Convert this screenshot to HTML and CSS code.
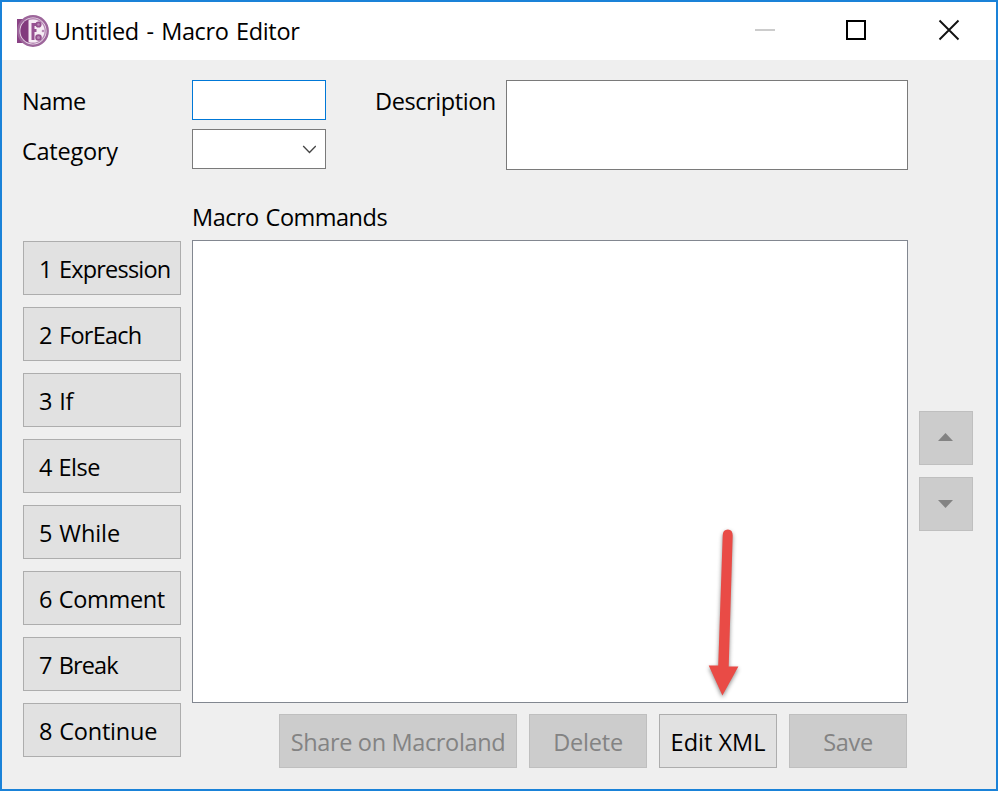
FILE: index.html
```html
<!DOCTYPE html>
<html lang="en">
<head>
<meta charset="utf-8">
<title>Untitled - Macro Editor</title>
<link rel="stylesheet" href="styles.css">
</head>
<body>
<div class="window">
  <header class="titlebar">
    <svg class="logo" width="34" height="34" viewBox="0 0 34 34">
      <rect x="1" y="5" width="8" height="24" fill="#8a4285"/>
      <circle cx="17" cy="17" r="14.700" fill="#f4eaf3" stroke="#9d669b" stroke-width="2.400"/>
      <circle cx="17" cy="17" r="12.200" fill="#f6edf5" stroke="#b88bb6" stroke-width="1.400"/>
      <path d="M12.500 5.500A12.300 12.300 0 0 0 12.500 28.500Z" fill="#823b7d"/>
      <path d="M15.500 9h5.500v3h-2.500v3h2v3h-2v8h-3z" fill="#965192"/>
      <circle cx="22.500" cy="10.500" r="2.200" fill="#b98ab7" stroke="#94518f" stroke-width="1.800"/>
      <circle cx="27" cy="17" r="1.300" fill="#b98ab7"/>
      <circle cx="22.500" cy="23.500" r="2.400" fill="#b98ab7" stroke="#94518f" stroke-width="1.800"/>
    </svg>
    <h1 class="title">Untitled - Macro Editor</h1>
    <svg class="controls" width="206" height="22" viewBox="0 0 206 22" fill="none">
      <path d="M0 11H20" stroke="#ccc" stroke-width="2"/>
      <rect x="92" y="2" width="18" height="18" stroke="#000" stroke-width="2"/>
      <path d="M184.500 1.500L203.500 20.500M203.500 1.500L184.500 20.500" stroke="#111" stroke-width="1.900"/>
    </svg>
  </header>
  <main class="content">
    <section class="fields">
      <div class="names">
        <label class="text name">Name</label><div class="box input"></div>
        <label class="text category">Category</label>
        <div class="box select">
          <svg width="14" height="9" viewBox="0 0 14 9" fill="none"><path d="M1.200 1L7.500 7.500L13.800 1" stroke="#444" stroke-width="1.300"/></svg>
        </div>
      </div>
      <label class="text description">Description</label>
      <div class="box area"></div>
    </section>
    <h2 class="text heading">Macro Commands</h2>
    <section class="workspace">
      <nav class="commands">
        <button class="button expression">1 Expression</button>
        <button class="button foreach">2 ForEach</button>
        <button class="button if">3 If</button>
        <button class="button else">4 Else</button>
        <button class="button while">5 While</button>
        <button class="button comment">6 Comment</button>
        <button class="button break">7 Break</button>
        <button class="button continue">8 Continue</button>
      </nav>
      <div class="editor">
        <div class="list"></div>
        <div class="actions">
          <button class="button share" disabled>Share on Macroland</button>
          <button class="button delete" disabled>Delete</button>
          <button class="button edit">Edit XML</button>
          <button class="button save" disabled>Save</button>
        </div>
        <svg class="arrow" width="50" height="182" viewBox="0 0 50 182">
          <path d="M13 15.500Q13 9.500 18.200 9.500Q23 9.500 23 15.500L19 146.500H28.700L12.700 175.500L-1 145.500H8.500Z" transform="translate(9.700 0)" fill="#e94b46"/>
        </svg>
      </div>
      <div class="order">
        <button class="button" disabled aria-label="Move up"><svg width="16" height="8" viewBox="0 0 16 8"><path d="M0 8L7.500 0L15 8Z" fill="#838383"/></svg></button>
        <button class="button down" disabled aria-label="Move down"><svg width="16" height="8" viewBox="0 0 16 8"><path d="M0 0L7.500 8L15 0Z" fill="#838383"/></svg></button>
      </div>
    </section>
  </main>
</div>
</body>
</html>
```
FILE: styles.css
```css
* { box-sizing: border-box; }
body { margin: 0; }
.window {
  width: 998px; height: 791px;
  border: 2px solid #1a82d8;
  background: #efefef; color: #000;
  font: 23.5px/32px "Open Sans", "Noto Sans", sans-serif;
  overflow: hidden;
}
.titlebar { display: flex; height: 58px; background: #fff; padding: 12px 35px 0 14px; }
.logo { flex: none; }
.title { margin: 1px 0 0 4px; font: inherit; white-space: nowrap; letter-spacing: -.36px; word-spacing: 1.8px; }
.controls { margin: 5px 0 0 auto; }
.content { padding: 20px 23px 0 21px; }
.fields { display: flex; height: 90px; }
.names { display: grid; grid-template: 40px 40px / 169px 134px; row-gap: 9px; width: 303px; }
.text { margin: 0; font: inherit; white-space: nowrap; }
.name { padding-top: 5px; margin-left: -1px; letter-spacing: -.5px; }
.category { padding-top: 6px; margin-left: -1px; letter-spacing: -.25px; }
.description { width: 131px; margin-left: 49px; padding-top: 5px; letter-spacing: -.42px; }
.box { background: #fff; border: 1px solid #7a7a7a; }
.input { border-color: #0078d7; }
.select { display: flex; justify-content: flex-end; align-items: center; padding-right: 9px; }
.area { width: 402px; height: 90px; }
.heading { margin: 31px 0 7px 169px; letter-spacing: -.5px; word-spacing: 1.3px; }
.workspace { display: grid; grid-template-columns: 158px 716px 54px; column-gap: 11px; }
.commands { display: grid; grid-auto-rows: 54px; gap: 12px; padding-top: 1px; }
.button {
  display: flex; align-items: center; height: 54px; margin: 0;
  padding: 2px 0 0 15px; border: 1px solid #adadad; border-radius: 0;
  background: #e1e1e1; color: #000; font: inherit; white-space: nowrap;
}
.commands .button { word-spacing: 1px; }
.commands .expression { letter-spacing: -.8px; word-spacing: 2px; }
.commands .foreach { letter-spacing: -.75px; word-spacing: 2px; }
.commands .if { letter-spacing: -.2px; }
.commands .else { letter-spacing: -.5px; }
.commands .while { letter-spacing: -.1px; }
.commands .comment { letter-spacing: -.35px; }
.commands .break { letter-spacing: -.9px; word-spacing: 2px; }
.commands .continue { letter-spacing: -.2px; }
.share { letter-spacing: -.35px; }
.delete { letter-spacing: -.2px; }
.save { letter-spacing: -.3px; }
.button:disabled { background: #ccc; border-color: #bfbfbf; color: #838383; }
.editor { position: relative; }
.list { height: 463px; border: 1px solid #828790; background: #fff; }
.actions { display: grid; grid-template-columns: 238px 118px 118px 118px; gap: 12px; padding: 11px 1px 0 0; justify-content: end; }
.actions .button { padding-left: 0; justify-content: center; }
.order { display: grid; grid-auto-rows: 54px; gap: 12px; padding-top: 171px; align-content: start; }
.order .button { padding: 0 0 2px; justify-content: center; }
.order .down { padding: 0; }
.arrow { position: absolute; left: 508px; top: 280px; filter: drop-shadow(0 2px 2px rgb(0 0 0 / 45%)); }
```
